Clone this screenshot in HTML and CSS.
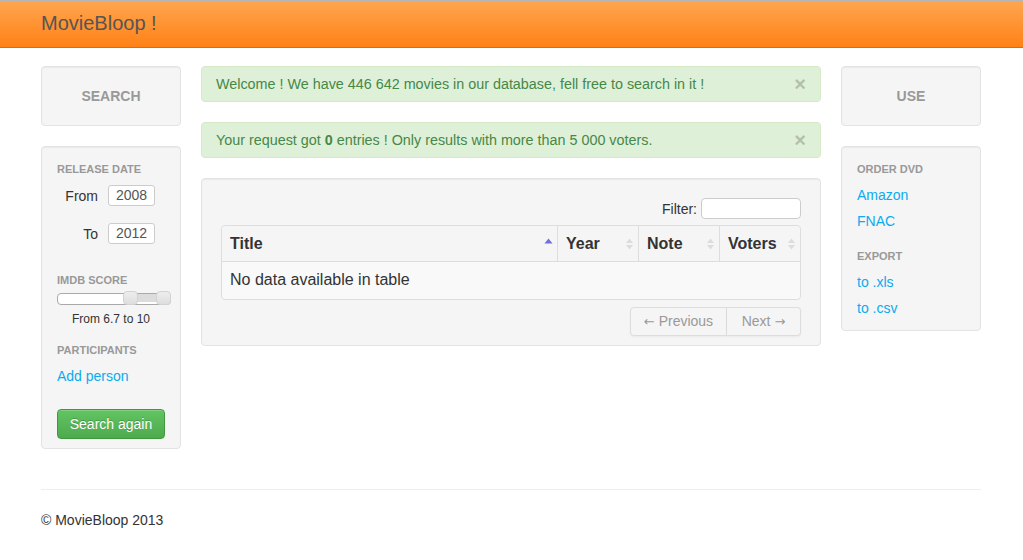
FILE: index.html
```html
<!DOCTYPE html>
<html>
<head>
<meta charset="utf-8">
<title>MovieBloop !</title>
<link rel="stylesheet" href="styles.css">
</head>
<body>
<header class="navbar">
  <div class="container">
    <span class="brand">MovieBloop !</span>
  </div>
</header>

<main class="container row">
  <aside class="side">
    <div class="well well-title">SEARCH</div>
    <div class="well well-nav well-left">
      <div class="nav-header">Release date</div>
      <div class="date-row first"><span class="date-label">From</span><span class="date-input">2008</span></div>
      <div class="date-row"><span class="date-label">To</span><span class="date-input">2012</span></div>
      <div class="nav-header gap-l">IMDB score</div>
      <div class="slider">
        <div class="slider-range"></div>
        <span class="handle handle-a"></span>
        <span class="handle handle-b"></span>
      </div>
      <div class="slider-text">From 6.7 to 10</div>
      <div class="nav-header gap-m">Participants</div>
      <a class="nav-link first" href="#">Add person</a>
      <button class="btn-success">Search again</button>
    </div>
  </aside>

  <section class="content">
    <div class="alert">Welcome ! We have 446 642 movies in our database, fell free to search in it ! <span class="close">×</span></div>
    <div class="alert">Your request got <b>0</b> entries ! Only results with more than 5 000 voters. <span class="close">×</span></div>
    <div class="well well-table">
      <div class="filter"><label>Filter:</label><span class="filter-input"></span></div>
      <table class="table">
        <thead>
          <tr>
            <th class="c-title"><span class="th-in">Title<svg width="9" height="14" viewBox="0 0 9 14"><path d="M0.5 6.5 L4.5 1.5 L8.5 6.5 Z" fill="#6f6fe0"/></svg></span></th>
            <th class="c-year"><span class="th-in">Year<svg width="9" height="14" viewBox="0 0 9 14"><path d="M1 6 L4.5 1.5 L8 6 Z" fill="#dcdcdc"/><path d="M1 8 L4.5 12.5 L8 8 Z" fill="#dcdcdc"/></svg></span></th>
            <th class="c-note"><span class="th-in">Note<svg width="9" height="14" viewBox="0 0 9 14"><path d="M1 6 L4.5 1.5 L8 6 Z" fill="#dcdcdc"/><path d="M1 8 L4.5 12.5 L8 8 Z" fill="#dcdcdc"/></svg></span></th>
            <th class="c-voters"><span class="th-in">Voters<svg width="9" height="14" viewBox="0 0 9 14"><path d="M1 6 L4.5 1.5 L8 6 Z" fill="#dcdcdc"/><path d="M1 8 L4.5 12.5 L8 8 Z" fill="#dcdcdc"/></svg></span></th>
          </tr>
        </thead>
        <tbody>
          <tr><td colspan="4">No data available in table</td></tr>
        </tbody>
      </table>
      <div class="pager">
        <span class="pg pg-prev"><span class="arrow">←</span> Previous</span><span class="pg pg-next">Next <span class="arrow">→</span></span>
      </div>
    </div>
  </section>

  <aside class="side">
    <div class="well well-title">USE</div>
    <div class="well well-nav well-right">
      <div class="nav-header">Order DVD</div>
      <a class="nav-link first" href="#">Amazon</a>
      <a class="nav-link" href="#">FNAC</a>
      <div class="nav-header gap-e">Export</div>
      <a class="nav-link first" href="#">to .xls</a>
      <a class="nav-link" href="#">to .csv</a>
    </div>
  </aside>
</main>

<footer class="container footer">
  <p>© MovieBloop 2013</p>
</footer>
</body>
</html>
```

FILE: styles.css
```css
* { box-sizing: border-box; }

body {
  margin: 0;
  font-family: "Liberation Sans", Arial, sans-serif;
  font-size: 14px;
  line-height: 20px;
  color: #333;
  background: #fff;
}

.container {
  width: 940px;
  margin-left: calc((100% - 941px) / 2);
}

.navbar {
  height: 48px;
  border-top: 1px solid #b5b5b5;
  border-bottom: 1px solid #e36c00;
  background: linear-gradient(#ffa650, #ff8116);
}

.brand {
  display: block;
  font-size: 20px;
  line-height: 45px;
  color: #555;
}

.row {
  display: flex;
  gap: 20px;
  padding-top: 18px;
  align-items: flex-start;
}

.side { width: 140px; flex: none; }
.content { width: 620px; flex: none; }

.well {
  background: #f5f5f5;
  border: 1px solid #e3e3e3;
  border-radius: 4px;
  box-shadow: inset 0 1px 1px rgba(0, 0, 0, 0.05);
}

.well-title {
  height: 60px;
  line-height: 58px;
  text-align: center;
  font-weight: bold;
  color: #999;
  margin-bottom: 20px;
}

.well-nav {
  padding: 12px 15px 11px;
}
.well-left { padding-bottom: 9px; }
.well-right { padding-bottom: 12px; }

.nav-header {
  font-size: 11px;
  font-weight: bold;
  line-height: 20px;
  color: #999;
  text-transform: uppercase;
}
.gap-l { margin-top: 26px; }
.gap-m { margin-top: 12px; }
.gap-e { margin-top: 15px; }

.date-row {
  display: flex;
  align-items: center;
  gap: 10px;
  margin-top: 17px;
  height: 21px;
}
.date-row.first { margin-top: 6px; }

.date-label {
  width: 41px;
  text-align: right;
}

.date-input {
  width: 47px;
  height: 21px;
  border: 1px solid #ccc;
  border-radius: 3px;
  background: #fff;
  line-height: 19px;
  text-align: center;
  color: #555;
}

.slider {
  position: relative;
  height: 14px;
  margin-top: 1px;
  margin-right: -6px;
}
.slider::before {
  content: "";
  position: absolute;
  left: 0;
  right: 0;
  top: 2px;
  height: 10px;
  border: 1px solid #aaa;
  border-radius: 4px;
  background: #fff;
}
.slider-range {
  position: absolute;
  left: 75px;
  right: 10px;
  top: 3px;
  height: 8px;
  background: #dcdcdc;
}
.handle {
  position: absolute;
  top: 0;
  width: 15px;
  height: 14px;
  border: 1px solid #d3d3d3;
  border-radius: 4px;
  background: linear-gradient(#ededed, #dedede);
}
.handle-a { left: 66px; }
.handle-b { right: 0; }

.slider-text {
  font-size: 12px;
  line-height: 18px;
  margin-top: 5px;
  text-align: center;
}

.nav-link {
  display: block;
  margin-top: 6px;
  color: #0aabf0;
  text-decoration: none;
}

.btn-success {
  display: block;
  margin-top: 23px;
  width: 108px;
  height: 30px;
  padding: 0;
  font-family: inherit;
  font-size: 14px;
  color: #fff;
  border: 1px solid #3f9a3f;
  border-radius: 4px;
  background: linear-gradient(#62c462, #4eaa4e);
  text-shadow: 0 -1px 0 rgba(0, 0, 0, 0.2);
  box-shadow: inset 0 1px 0 rgba(255, 255, 255, 0.2);
}

.alert {
  position: relative;
  padding: 7px 35px 7px 14px;
  margin-bottom: 20px;
  background: #dff0d8;
  border: 1px solid #d6e9c6;
  border-radius: 4px;
  color: #468847;
  font-size: 14.35px;
}

.close {
  position: absolute;
  right: 14px;
  top: 7px;
  font-size: 20px;
  font-weight: bold;
  line-height: 20px;
  color: #000;
  opacity: 0.2;
}

.well-table {
  padding: 19px 19px 9px;
}

.filter {
  display: flex;
  justify-content: flex-end;
  align-items: center;
  gap: 4px;
  height: 21px;
}
.filter label { line-height: 20px; }
.filter-input {
  width: 100px;
  height: 21px;
  border: 1px solid #ccc;
  border-radius: 4px;
  background: #fff;
}

.table {
  width: 100%;
  margin-top: 6px;
  border-collapse: separate;
  border-spacing: 0;
  border: 1px solid #ddd;
  border-radius: 4px;
  font-size: 16px;
  line-height: 20px;
}
.table th {
  text-align: left;
  padding: 8px 4px 7px 8px;
  font-weight: bold;
  border-bottom: 1px solid #ddd;
  background: #f5f5f5;
}
.table th + th { border-left: 1px solid #ddd; }
.table th:first-child { border-top-left-radius: 4px; }
.table th:last-child { border-top-right-radius: 4px; }
.th-in {
  display: flex;
  justify-content: space-between;
  align-items: center;
}
.c-title { width: 335px; }
.c-year { width: 81px; }
.c-note { width: 81px; }
.table td {
  padding: 8px 8px 9px;
  background: #f9f9f9;
  border-radius: 0 0 4px 4px;
}

.pager {
  display: flex;
  justify-content: flex-end;
  margin-top: 7px;
}
.pg {
  height: 29px;
  line-height: 27px;
  white-space: nowrap;
  text-align: center;
  border: 1px solid #ddd;
  color: #999;
  background: #f5f5f5;
  box-shadow: 0 1px 2px rgba(0, 0, 0, 0.05);
}
.arrow { font-family: "DejaVu Sans", sans-serif; font-size: 13px; }
.pg-prev { border-radius: 4px 0 0 4px; width: 97px; }
.pg-next { border-left: none; border-radius: 0 4px 4px 0; width: 74px; }

.footer {
  margin-top: 40px;
  border-top: 1px solid #eee;
}
.footer p {
  margin: 20px 0;
}
```
